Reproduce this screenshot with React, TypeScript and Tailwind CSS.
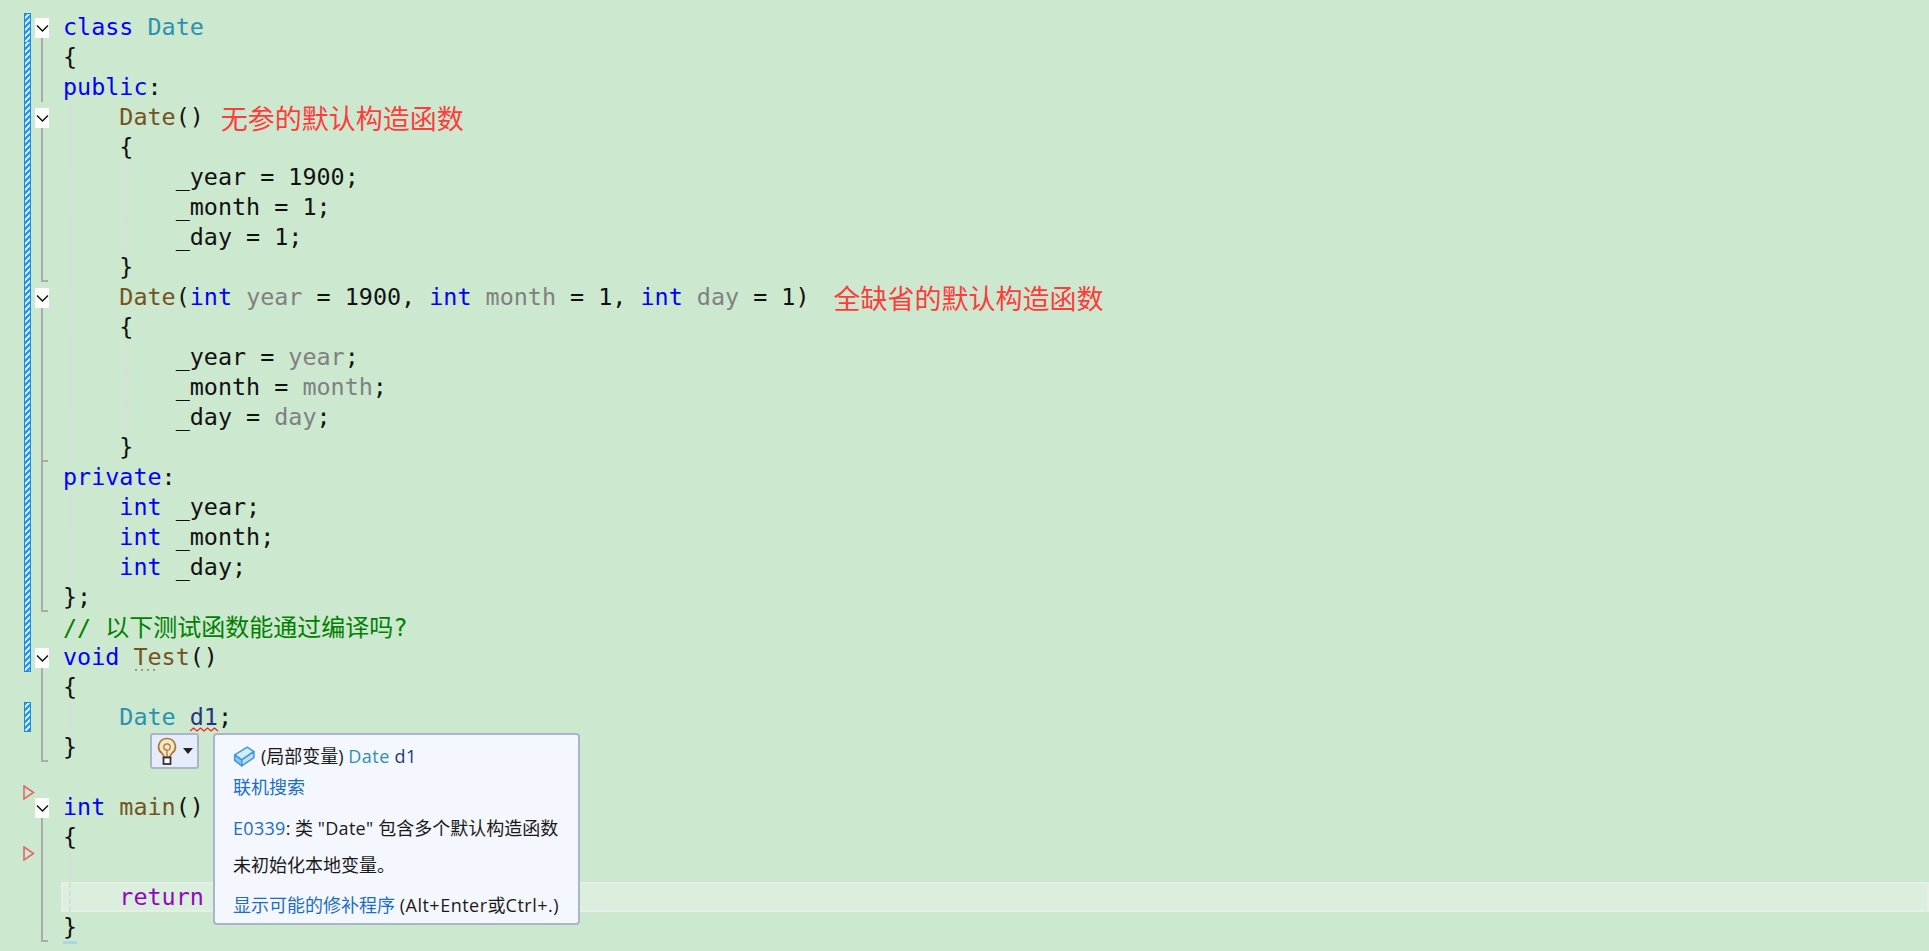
import React from "react";

const KW = "text-[#0000ff]";
const TY = "text-[#2b91af]";
const FN = "text-[#74531f]";
const PA = "text-[#808080]";
const CM = "text-[#008000]";
const CMZH = "text-[#008000] text-[24px]";
const RT = "text-[#8f08c4]";
const LV = "text-[#1f377f]";

type Token = [string, string?];
type Fold = "open" | "line" | "end" | "none";

type LineData = {
  tokens: Token[];
  fold: Fold;
  bar?: "top" | "mid" | "bottom" | "single";
  guides?: number;
  note?: "first" | "second";
  active?: boolean;
};

const lines: LineData[] = [
  { tokens: [["class ", KW], ["Date", TY]], fold: "open", bar: "top" },
  { tokens: [["{"]], fold: "line", bar: "mid" },
  { tokens: [["public", KW], [":"]], fold: "line", bar: "mid" },
  { tokens: [["    "], ["Date", FN], ["()"]], fold: "open", bar: "mid", guides: 1, note: "first" },
  { tokens: [["    {"]], fold: "line", bar: "mid", guides: 1 },
  { tokens: [["        _year = 1900;"]], fold: "line", bar: "mid", guides: 2 },
  { tokens: [["        _month = 1;"]], fold: "line", bar: "mid", guides: 2 },
  { tokens: [["        _day = 1;"]], fold: "line", bar: "mid", guides: 2 },
  { tokens: [["    }"]], fold: "end", bar: "mid", guides: 1 },
  {
    tokens: [
      ["    "],
      ["Date", FN],
      ["("],
      ["int ", KW],
      ["year", PA],
      [" = 1900, "],
      ["int ", KW],
      ["month", PA],
      [" = 1, "],
      ["int ", KW],
      ["day", PA],
      [" = 1)"],
    ],
    fold: "open",
    bar: "mid",
    guides: 1,
    note: "second",
  },
  { tokens: [["    {"]], fold: "line", bar: "mid", guides: 1 },
  { tokens: [["        _year = "], ["year", PA], [";"]], fold: "line", bar: "mid", guides: 2 },
  { tokens: [["        _month = "], ["month", PA], [";"]], fold: "line", bar: "mid", guides: 2 },
  { tokens: [["        _day = "], ["day", PA], [";"]], fold: "line", bar: "mid", guides: 2 },
  { tokens: [["    }"]], fold: "end", bar: "mid", guides: 1 },
  { tokens: [["private", KW], [":"]], fold: "line", bar: "mid" },
  { tokens: [["    "], ["int ", KW], ["_year;"]], fold: "line", bar: "mid", guides: 1 },
  { tokens: [["    "], ["int ", KW], ["_month;"]], fold: "line", bar: "mid", guides: 1 },
  { tokens: [["    "], ["int ", KW], ["_day;"]], fold: "line", bar: "mid", guides: 1 },
  { tokens: [["};"]], fold: "end", bar: "mid" },
  { tokens: [["// ", CM], ["以下测试函数能通过编译吗?", CMZH]], fold: "none", bar: "mid" },
  { tokens: [["void ", KW], ["Test", FN], ["()"]], fold: "open", bar: "bottom" },
  { tokens: [["{"]], fold: "line" },
  { tokens: [["    "], ["Date ", TY], ["d1", LV], [";"]], fold: "line", bar: "single", guides: 1 },
  { tokens: [["}"]], fold: "end" },
  { tokens: [], fold: "none" },
  { tokens: [["int ", KW], ["main", FN], ["()"]], fold: "open" },
  { tokens: [["{"]], fold: "line" },
  { tokens: [], fold: "line", guides: 1 },
  { tokens: [["    "], ["return ", RT], ["0;"]], fold: "line", guides: 1, active: true },
  { tokens: [["}"]], fold: "end" },
];

const hatch =
  "bg-[repeating-linear-gradient(135deg,#2196f3_0,#2196f3_2.12px,#cdeaf6_2.12px,#cdeaf6_4.24px)]";

const ChangeBar = ({ bar }: { bar?: LineData["bar"] }) => {
  if (!bar) return null;
  if (bar === "top") return <div className={`mt-[1px] h-[29px] w-full border-x border-t border-[#1e88e5] ${hatch}`} />;
  if (bar === "bottom") return <div className={`h-full w-full border-x border-b border-[#1e88e5] ${hatch}`} />;
  if (bar === "single") return <div className={`h-full w-full border border-[#1e88e5] ${hatch}`} />;
  return <div className={`h-full w-full border-x border-[#1e88e5] ${hatch}`} />;
};

const FoldCell = ({ fold }: { fold: Fold }) => {
  if (fold === "none") return <div className="w-[14px] shrink-0" />;
  if (fold === "open") {
    return (
      <div className="flex h-full w-[14px] shrink-0 flex-col">
        <div className="h-[6px] w-full" />
        <div className="flex h-[20px] w-full shrink-0 items-center justify-center bg-white">
          <svg width="13" height="9" viewBox="0 0 13 9" fill="none">
            <path d="M1 1.5 L6.5 7 L12 1.5" stroke="#111" strokeWidth="1.5" />
          </svg>
        </div>
        <div className="ml-[6px] w-[2px] flex-1 bg-[#ababab]" />
      </div>
    );
  }
  return (
    <div className="flex h-full w-[14px] shrink-0 flex-col">
      <div className="ml-[6px] w-[2px] flex-1 bg-[#ababab]" />
      {fold === "end" && <div className="ml-[6px] h-[2px] w-[7px] bg-[#ababab]" />}
    </div>
  );
};

const Guides = ({ count }: { count?: number }) => {
  if (!count) return null;
  return (
    <>
      <div className="absolute left-[8px] top-0 h-full w-[2px] bg-[repeating-linear-gradient(180deg,#dcdcd8_0,#dcdcd8_6px,transparent_6px,transparent_8px)]" />
      {count > 1 && (
        <div className="absolute left-[65px] top-0 h-full w-[2px] bg-[repeating-linear-gradient(180deg,#dcdcd8_0,#dcdcd8_6px,transparent_6px,transparent_8px)]" />
      )}
    </>
  );
};

const CodeLine = ({ line }: { line: LineData }) => (
  <div className="flex h-[30px]">
    <div className="ml-[24px] h-full w-[7px] shrink-0">
      <ChangeBar bar={line.bar} />
    </div>
    <div className="ml-[4px] flex h-full">
      <FoldCell fold={line.fold} />
    </div>
    <div
      className={`relative ml-[12px] flex h-full flex-1 items-center whitespace-pre pl-[2px] pt-[2px] ${
        line.active ? "bg-[#dcefdf] shadow-[inset_0_0_0_2px_#e4efe6]" : ""
      }`}
    >
      <Guides count={line.guides} />
      <span>
        {line.tokens.map(([text, color], i) => (
          <span key={i} className={color}>
            {text}
          </span>
        ))}
      </span>
      {line.note === "first" && (
        <span className="ml-[17px] font-['Noto_Sans_CJK_SC',sans-serif] text-[27px] text-[#ff3b3b]">
          无参的默认构造函数
        </span>
      )}
      {line.note === "second" && (
        <span className="ml-[24px] font-['Noto_Sans_CJK_SC',sans-serif] text-[27px] text-[#ff3b3b]">
          全缺省的默认构造函数
        </span>
      )}
    </div>
  </div>
);

const BulbIcon = () => (
  <svg width="20" height="29" viewBox="0 0 20 29" fill="none">
    <path
      d="M10 1.5a8.2 8.2 0 0 0-5 14.8c1.2 1 1.8 2.4 1.8 3.7h6.4c0-1.3.6-2.7 1.8-3.7a8.2 8.2 0 0 0-5-14.8z"
      fill="#f3e6c4"
      stroke="#a9793a"
      strokeWidth="1.7"
    />
    <circle cx="10" cy="10" r="3.2" stroke="#a9793a" strokeWidth="1.3" />
    <path d="M10 13.2V20" stroke="#a9793a" strokeWidth="1.3" />
    <rect x="6.5" y="20.5" width="7" height="6.5" fill="#fff" stroke="#333" strokeWidth="1.8" />
  </svg>
);

const LocalVarIcon = () => (
  <svg width="22" height="22" viewBox="0 0 20 20" fill="none">
    <path d="M1.5 9 L13 2 L19 6 L8 13.5 Z" fill="#d6ecfa" stroke="#3f9ad6" strokeWidth="1.4" strokeLinejoin="round" />
    <path d="M1.5 9 V14 L8 19 V13.5 Z" fill="#8cc6ee" stroke="#3f9ad6" strokeWidth="1.4" strokeLinejoin="round" />
    <path d="M8 13.5 V19 L19 11.5 V6 Z" fill="#bfe0f6" stroke="#3f9ad6" strokeWidth="1.4" strokeLinejoin="round" />
  </svg>
);

const QuickInfo = () => (
  <div className="absolute left-[213px] top-[733px] flex h-[192px] w-[367px] flex-col rounded-[4px] border-2 border-[#a9b5cc] bg-[#f5f7fe] pl-[18px] font-['Open_Sans','Noto_Sans_CJK_SC',sans-serif] text-[18px] text-[#1a1a1a]">
    <div className="mt-[9px] flex h-[24px] items-center gap-[6px]">
      <LocalVarIcon />
      <span>
        (局部变量) <span className="tracking-[0.5px] text-[#2b91af]">Date</span>{" "}
        <span className="tracking-[0.5px] text-[#1f377f]">d1</span>
      </span>
    </div>
    <div className="mt-[7px] h-[24px] leading-[24px] text-[#1b6ec2]">联机搜索</div>
    <div className="mt-[17px] h-[24px] leading-[24px]">
      <span className="tracking-[0.3px] text-[#1b6ec2]">E0339</span>: 类 <span className="tracking-[0.3px]">"Date"</span>{" "}
      包含多个默认构造函数
    </div>
    <div className="mt-[13px] h-[24px] leading-[24px]">未初始化本地变量。</div>
    <div className="mt-[16px] h-[24px] leading-[24px]">
      <span className="text-[#1b6ec2]">显示可能的修补程序</span>{" "}
      <span className="tracking-[0.5px]">(Alt+Enter</span>或<span className="tracking-[0.5px]">Ctrl+.)</span>
    </div>
  </div>
);

const RunMark = ({ top }: { top: string }) => (
  <svg className={`absolute left-[23px] ${top}`} width="12" height="15" viewBox="0 0 12 15" fill="none">
    <path d="M1 1 L10.5 7.5 L1 14 Z" stroke="#e2696b" strokeWidth="1.6" />
  </svg>
);

export default function App() {
  return (
    <div className="relative h-[951px] w-full overflow-hidden bg-[#cce8cf] pt-[12px] font-['DejaVu_Sans_Mono','Noto_Sans_CJK_SC',monospace] text-[23.4px] text-[#111]">
      {lines.map((line, i) => (
        <CodeLine key={i} line={line} />
      ))}

      {/* Test() hint dots and the d1 error squiggle */}
      <div className="absolute left-[135px] top-[669px] flex gap-[4px]">
        <div className="h-[2px] w-[2px] bg-[#8f9a90]" />
        <div className="h-[2px] w-[2px] bg-[#8f9a90]" />
        <div className="h-[2px] w-[2px] bg-[#8f9a90]" />
        <div className="h-[2px] w-[2px] bg-[#8f9a90]" />
      </div>
      <svg className="absolute left-[190px] top-[727px]" width="28" height="6" viewBox="0 0 28 6" fill="none">
        <path d="M0 4 L3.5 1 L7 4 L10.5 1 L14 4 L17.5 1 L21 4 L24.5 1 L28 4" stroke="#ee2222" strokeWidth="1.2" />
      </svg>
      <RunMark top="top-[785px]" />
      <RunMark top="top-[846px]" />
      <div className="absolute left-[63px] top-[941px] h-[3px] w-[14px] bg-[#a9d5e8]" />

      <div className="absolute left-[150px] top-[733px] flex h-[36px] w-[49px] items-center gap-[6px] rounded-[3px] border-2 border-[#a9b5cc] bg-[#e6ecfb] pl-[5px]">
        <BulbIcon />
        <div className="h-0 w-0 border-x-[5px] border-t-[6px] border-x-transparent border-t-[#222]" />
      </div>

      <QuickInfo />
    </div>
  );
}
